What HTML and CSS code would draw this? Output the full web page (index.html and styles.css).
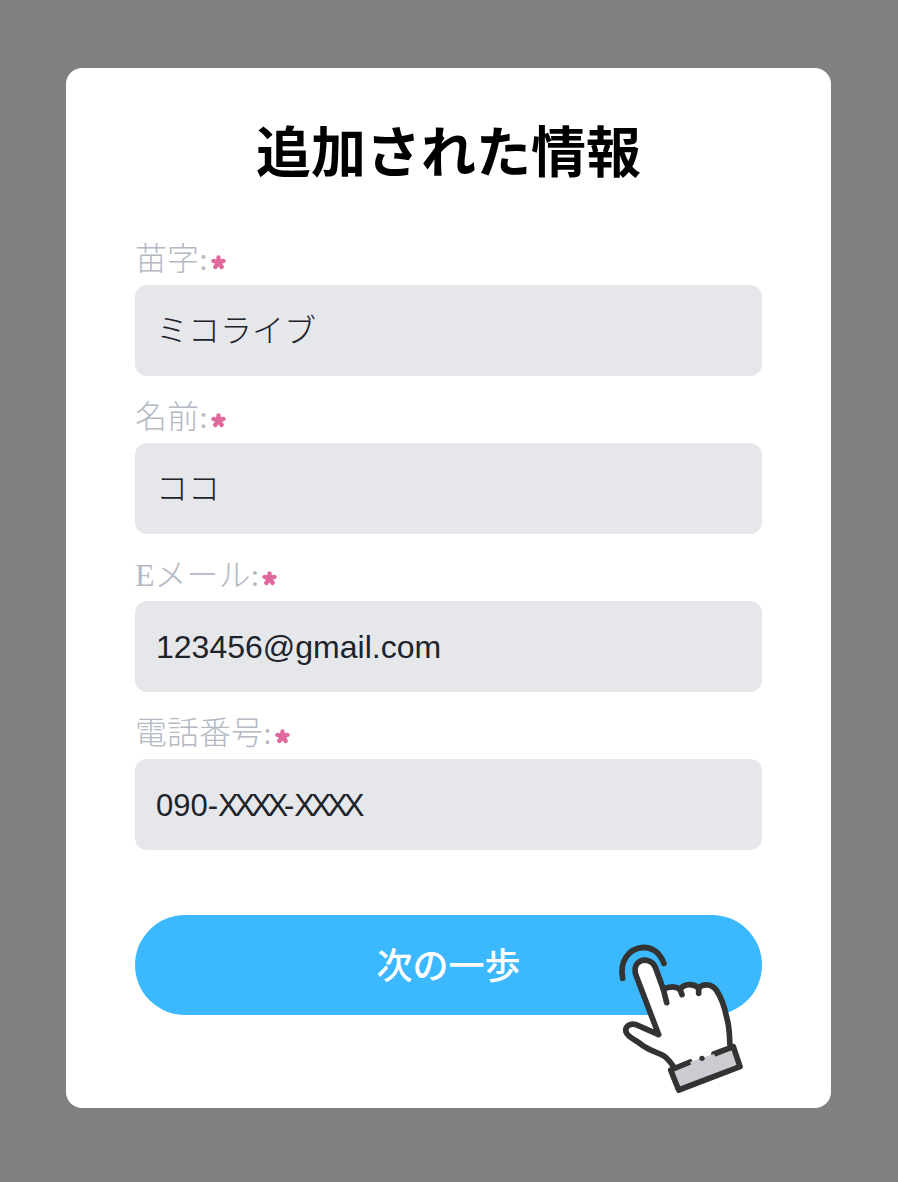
FILE: index.html
```html
<!DOCTYPE html>
<html lang="ja">
<head>
  <meta charset="UTF-8">
  <meta name="viewport" content="width=device-width, initial-scale=1.0">
  <title>追加された情報</title>
  <link rel="stylesheet" href="styles.css">
</head>
<body>
  <svg class="defs" width="0" height="0">
    <symbol id="star" viewBox="0 0 24 24">
      <path d="M12 12V4M12 12L20 9.5M12 12L17 19M12 12L7 19M12 12L4 9.5" fill="none" stroke="#e0689c" stroke-width="7" stroke-linecap="round"/>
    </symbol>
  </svg>
  <div class="card">
    <h2>追加された情報</h2>
    <div class="form-group">
      <div class="label">苗字:<svg class="req"><use href="#star"/></svg></div>
      <div class="field kana">ミコライブ</div>
    </div>
    <div class="form-group">
      <div class="label">名前:<svg class="req"><use href="#star"/></svg></div>
      <div class="field kana">ココ</div>
    </div>
    <div class="form-group">
      <div class="label">Eメール:<svg class="req"><use href="#star"/></svg></div>
      <div class="field">123456@gmail.com</div>
    </div>
    <div class="form-group">
      <div class="label">電話番号:<svg class="req"><use href="#star"/></svg></div>
      <div class="field tel">090-<span class="narrow">XXXX</span>-<span class="narrow">XXXX</span></div>
    </div>
    <button>次の一歩</button>

    <!-- pointer hand over the button -->
    <svg class="hand" viewBox="0 0 480 510" width="160" height="170">
      <path d="M68 145C58 95 85 55 130 52C158 52 180 70 192 100" fill="none" stroke="#333" stroke-width="17" stroke-linecap="round"/>
      <path d="M176 314L108 284C90 278 74 290 78 306C84 322 104 328 122 342C146 362 172 366 192 378C206 388 214 400 222 418L395 352C388 325 390 295 380 262C374 232 362 200 350 182C338 164 312 158 296 174C280 160 254 160 240 178C226 168 206 170 190 178L166 112C158 92 136 86 120 94C106 102 102 118 108 136Z" fill="#fff" stroke="none"/>
      <path d="M176 314L108 284C90 278 74 290 78 306C84 322 104 328 122 342C146 362 172 366 192 378C206 388 214 400 222 412M390 345C388 325 390 295 380 262C374 232 362 200 350 182C338 164 312 158 296 174C280 160 254 160 240 178C226 168 206 170 190 178L166 112C158 92 136 86 120 94C106 102 102 118 108 136L176 314" fill="none" stroke="#333" stroke-width="17" stroke-linejoin="round" stroke-linecap="round"/>
      <path d="M190 178L200 218M240 178L246 194M296 174L296 190" fill="none" stroke="#333" stroke-width="17" stroke-linecap="round"/>
      <path d="M212 420L236 480L420 410L400 350Z" fill="#cdcbd2"/>
      <path d="M270 396L212 420L236 480L420 410L400 350L342 372" fill="none" stroke="#333" stroke-width="17" stroke-linejoin="round" stroke-linecap="round"/>
      <path d="M270 396L342 372L352 395L280 420Z" fill="#cdcbd2"/>
      <circle cx="306" cy="385" r="8" fill="#333"/>
    </svg>
  </div>
</body>
</html>
```
FILE: styles.css
```css
body {
  margin: 0;
  height: 1182px;
  background-color: #808080;
  font-family: "Liberation Sans", "Noto Sans CJK JP", sans-serif;
  padding-top: 68px;
  box-sizing: border-box;
}
.defs {
  position: absolute;
}
.card {
  position: relative;
  box-sizing: border-box;
  width: 765px;
  height: 1040px;
  margin-left: 66px;
  padding: 45px 69px 0;
  border-radius: 16px;
  background-color: #fff;
}
h2 {
  margin: 0 0 56px;
  font-family: "Noto Sans CJK JP", sans-serif;
  font-size: 55px;
  line-height: 70px;
  font-weight: 600;
  text-align: center;
  color: #000;
}
.form-group {
  margin-bottom: 21px;
}
.label {
  display: flex;
  align-items: center;
  height: 46px;
  padding-bottom: 6px;
  box-sizing: border-box;
  font-family: "Liberation Serif", "Noto Sans CJK JP", serif;
  font-size: 32px;
  line-height: 40px;
  font-weight: 300;
  color: #b4bac4;
}
.req {
  width: 15px;
  height: 15px;
  margin: 6px 0 0 3px;
}
.field {
  box-sizing: border-box;
  height: 91px;
  padding: 0 21px;
  border-radius: 12px;
  background-color: #e6e7eb;
  font-size: 32px;
  line-height: 93px;
  color: #20232a;
}
.field.kana {
  padding-left: 21px;
  font-weight: 300;
}
.field.tel {
  font-size: 31px;
}
.narrow {
  letter-spacing: -4.2px;
}
button {
  display: block;
  width: 100%;
  height: 100px;
  margin-top: 65px;
  padding-bottom: 5px;
  border: none;
  border-radius: 50px;
  background-color: #3cb8ff;
  font-family: "Noto Sans CJK JP", sans-serif;
  font-size: 36px;
  font-weight: 500;
  color: #fff;
}
.hand {
  position: absolute;
  left: 534px;
  top: 862px;
}
```
